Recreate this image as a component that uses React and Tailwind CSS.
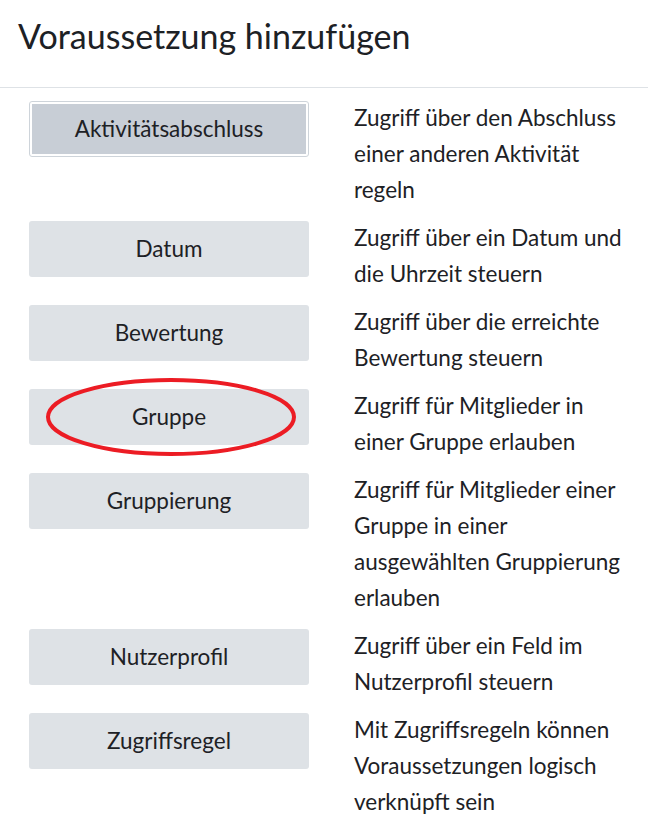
import React from "react";

const rows = [
  { label: "Aktivitätsabschluss", lines: ["Zugriff über den Abschluss", "einer anderen Aktivität", "regeln"], focused: true },
  { label: "Datum", lines: ["Zugriff über ein Datum und", "die Uhrzeit steuern"] },
  { label: "Bewertung", lines: ["Zugriff über die erreichte", "Bewertung steuern"] },
  { label: "Gruppe", lines: ["Zugriff für Mitglieder in", "einer Gruppe erlauben"], circled: true },
  { label: "Gruppierung", lines: ["Zugriff für Mitglieder einer", "Gruppe in einer", "ausgewählten Gruppierung", "erlauben"] },
  { label: "Nutzerprofil", lines: ["Zugriff über ein Feld im", "Nutzerprofil steuern"] },
  { label: "Zugriffsregel", lines: ["Mit Zugriffsregeln können", "Voraussetzungen logisch", "verknüpft sein"] },
];

const Row = ({ row }) => (
  <div className="flex mb-3">
    <div className="w-[354px] pl-[29px] shrink-0">
      <div className="relative w-[280px]">
        {row.focused ? (
          <button className="w-[280px] h-[56px] rounded-[3px] border border-[#ced4da] bg-white p-[2px]">
            <span className="flex h-full w-full items-center justify-center bg-[#c8ced6] text-[22.5px] text-[#1d2125]">
              {row.label}
            </span>
          </button>
        ) : (
          <button className="w-[280px] h-[56px] rounded-[3px] bg-[#dee2e6] text-[22.5px] text-[#1d2125] flex items-center justify-center">
            {row.label}
          </button>
        )}
        {row.circled && (
          <svg className="absolute left-[15px] top-[-11px] pointer-events-none" width="254" height="82" viewBox="0 0 254 82">
            <ellipse cx="127" cy="39" rx="123" ry="37" fill="none" stroke="#ec1c24" strokeWidth="4" />
          </svg>
        )}
      </div>
    </div>
    <div className="relative top-[-1px] text-[22.5px] leading-[36px] text-[#1d2125] whitespace-nowrap">
      {row.lines.map((l) => (
        <div key={l}>{l}</div>
      ))}
    </div>
  </div>
);

export default function App() {
  return (
    <div className="w-[648px] h-[834px] bg-white overflow-hidden" style={{ fontFamily: "Lato, 'Noto Sans', sans-serif" }}>
      <div className="h-[88px] border-b border-[#dee2e6] pl-[18px] pt-[14px]">
        <h1 className="text-[34px] leading-[44px] text-[#1d2125] font-normal">Voraussetzung hinzufügen</h1>
      </div>
      <div className="pt-[13px]">
        {rows.map((r) => (
          <Row key={r.label} row={r} />
        ))}
      </div>
    </div>
  );
}
